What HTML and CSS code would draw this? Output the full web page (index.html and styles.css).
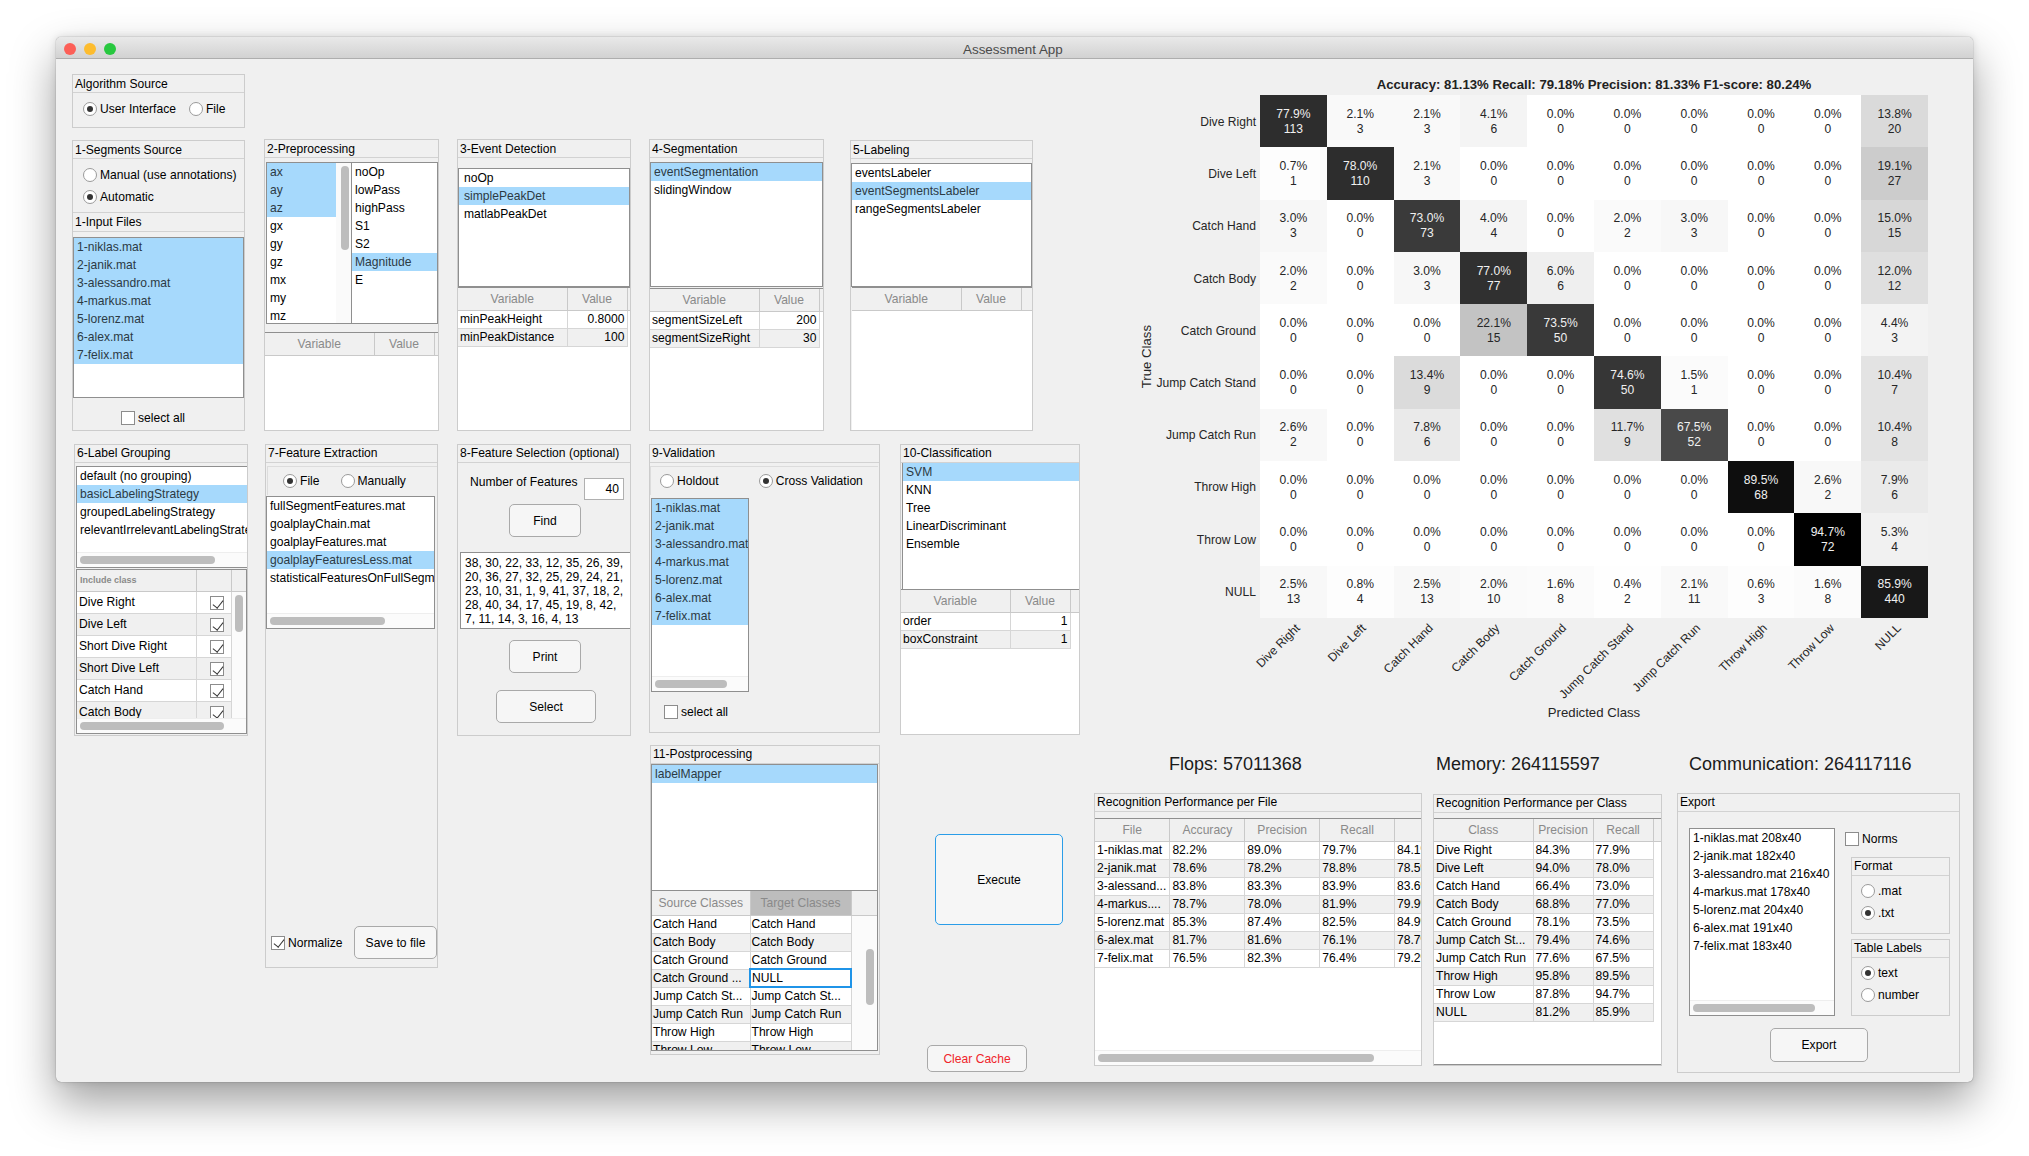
FILE: index.html
```html
<!DOCTYPE html>
<html lang="en">
<head>
  <meta charset="UTF-8">
  <title>Assessment App</title>
  <link rel="stylesheet" href="styles.css">
</head>
<body>
<div class="window">
  <div class="titlebar">
    <span class="light red"></span><span class="light yellow"></span><span class="light green"></span>
    <span class="title">Assessment App</span>
  </div>

  <div class="content">
    <div class="left">
      <section class="panel algo">
        <h2>Algorithm Source</h2>
        <div class="radio-line algo-radios">
          <label class="opt"><span class="radio on"></span>User Interface</label>
          <label class="opt file-opt"><span class="radio"></span>File</label>
        </div>
      </section>

      <div class="row-top">
        <section class="panel p1">
          <h2>1-Segments Source</h2>
          <div class="source-radios">
            <label class="opt"><span class="radio"></span>Manual (use annotations)</label>
            <label class="opt"><span class="radio on"></span>Automatic</label>
          </div>
          <h2 class="second-head">1-Input Files</h2>
          <ul class="list files-list">
            <li class="sel">1-niklas.mat</li>
            <li class="sel">2-janik.mat</li>
            <li class="sel">3-alessandro.mat</li>
            <li class="sel">4-markus.mat</li>
            <li class="sel">5-lorenz.mat</li>
            <li class="sel">6-alex.mat</li>
            <li class="sel">7-felix.mat</li>
          </ul>
          <label class="opt select-all"><span class="check"></span>select all</label>
        </section>

        <section class="panel p2">
          <h2>2-Preprocessing</h2>
          <div class="dual">
            <div class="dual-left">
              <ul class="list-plain signals">
                <li class="sel">ax</li>
                <li class="sel">ay</li>
                <li class="sel">az</li>
                <li>gx</li>
                <li>gy</li>
                <li>gz</li>
                <li>mx</li>
                <li>my</li>
                <li>mz</li>
              </ul>
              <div class="vtrack"><div class="vthumb"></div></div>
            </div>
            <ul class="list-plain filters">
              <li>noOp</li>
              <li>lowPass</li>
              <li>highPass</li>
              <li>S1</li>
              <li>S2</li>
              <li class="sel">Magnitude</li>
              <li>E</li>
            </ul>
          </div>
          <div class="tbl-wrap p2-table">
            <table class="tbl">
              <thead><tr><th class="w-109">Variable</th><th class="w-60">Value</th><th></th></tr></thead>
            </table>
          </div>
        </section>

        <section class="panel p3">
          <h2>3-Event Detection</h2>
          <ul class="list event-list">
            <li>noOp</li>
            <li class="sel">simplePeakDet</li>
            <li>matlabPeakDet</li>
          </ul>
          <div class="tbl-wrap">
            <table class="tbl">
              <thead><tr><th class="w-109">Variable</th><th class="w-60">Value</th><th></th></tr></thead>
              <tbody>
                <tr><td>minPeakHeight</td><td class="num">0.8000</td></tr>
                <tr><td>minPeakDistance</td><td class="num">100</td></tr>
              </tbody>
            </table>
          </div>
        </section>

        <section class="panel p4">
          <h2>4-Segmentation</h2>
          <ul class="list segment-list">
            <li class="sel">eventSegmentation</li>
            <li>slidingWindow</li>
          </ul>
          <div class="tbl-wrap seg-table">
            <table class="tbl">
              <thead><tr><th class="w-109">Variable</th><th class="w-60">Value</th><th></th></tr></thead>
              <tbody>
                <tr><td>segmentSizeLeft</td><td class="num">200</td></tr>
                <tr><td>segmentSizeRight</td><td class="num">30</td></tr>
              </tbody>
            </table>
          </div>
        </section>

        <section class="panel p5">
          <h2>5-Labeling</h2>
          <ul class="list label-list">
            <li>eventsLabeler</li>
            <li class="sel">eventSegmentsLabeler</li>
            <li>rangeSegmentsLabeler</li>
          </ul>
          <div class="tbl-wrap label-table">
            <table class="tbl">
              <thead><tr><th class="w-109">Variable</th><th class="w-60">Value</th><th></th></tr></thead>
            </table>
          </div>
        </section>
      </div>

      <div class="row-bottom">
        <section class="panel p6">
          <h2>6-Label Grouping</h2>
          <div class="list scroll-list group-list">
            <ul class="list-plain">
              <li>default (no grouping)</li>
              <li class="sel">basicLabelingStrategy</li>
              <li>groupedLabelingStrategy</li>
              <li>relevantIrrelevantLabelingStrategy</li>
            </ul>
            <div class="hscroll"><div class="hthumb thumb-135"></div></div>
          </div>
          <div class="list scroll-list class-table">
            <div class="tbl-clip">
              <table class="tbl tall-rows">
                <thead><tr><th class="w-119 small-head">Include class</th><th class="w-35"></th><th></th></tr></thead>
                <tbody>
                  <tr><td>Dive Right</td><td class="mid"><span class="check on"></span></td></tr>
                  <tr><td>Dive Left</td><td class="mid"><span class="check on"></span></td></tr>
                  <tr><td>Short Dive Right</td><td class="mid"><span class="check on"></span></td></tr>
                  <tr><td>Short Dive Left</td><td class="mid"><span class="check on"></span></td></tr>
                  <tr><td>Catch Hand</td><td class="mid"><span class="check on"></span></td></tr>
                  <tr><td>Catch Body</td><td class="mid"><span class="check on"></span></td></tr>
                </tbody>
              </table>
              <div class="vthumb class-thumb"></div>
            </div>
            <div class="hscroll"><div class="hthumb thumb-144"></div></div>
          </div>
        </section>

        <section class="panel p7">
          <h2>7-Feature Extraction</h2>
          <div class="subradio radio-line feature-radios">
            <label class="opt"><span class="radio on"></span>File</label>
            <label class="opt manual-opt"><span class="radio"></span>Manually</label>
          </div>
          <div class="list scroll-list feature-list">
            <ul class="list-plain">
              <li>fullSegmentFeatures.mat</li>
              <li>goalplayChain.mat</li>
              <li>goalplayFeatures.mat</li>
              <li class="sel">goalplayFeaturesLess.mat</li>
              <li>statisticalFeaturesOnFullSegments.mat</li>
            </ul>
            <div class="hscroll"><div class="hthumb thumb-115"></div></div>
          </div>
          <div class="normalize-row">
            <label class="opt"><span class="check on"></span>Normalize</label>
            <button class="btn save-btn">Save to file</button>
          </div>
        </section>

        <section class="panel p8">
          <h2>8-Feature Selection (optional)</h2>
          <div class="features-count">
            <span class="count-label">Number of Features</span>
            <span class="num-input">40</span>
          </div>
          <button class="btn find-btn">Find</button>
          <div class="result-box">38, 30, 22, 33, 12, 35, 26, 39,<br>20, 36, 27, 32, 25, 29, 24, 21,<br>23, 10, 31, 1, 9, 41, 37, 18, 2,<br>28, 40, 34, 17, 45, 19, 8, 42,<br>7, 11, 14, 3, 16, 4, 13</div>
          <button class="btn find-btn print-btn">Print</button>
          <button class="btn select-btn">Select</button>
        </section>

        <div class="col-valid">
          <section class="panel p9">
            <h2>9-Validation</h2>
            <div class="subradio radio-line valid-radios">
              <label class="opt"><span class="radio"></span>Holdout</label>
              <label class="opt cross-opt"><span class="radio on"></span>Cross Validation</label>
            </div>
            <div class="list scroll-list valid-list">
              <ul class="list-plain">
                <li class="sel">1-niklas.mat</li>
                <li class="sel">2-janik.mat</li>
                <li class="sel">3-alessandro.mat</li>
                <li class="sel">4-markus.mat</li>
                <li class="sel">5-lorenz.mat</li>
                <li class="sel">6-alex.mat</li>
                <li class="sel">7-felix.mat</li>
              </ul>
              <div class="hscroll"><div class="hthumb thumb-72"></div></div>
            </div>
            <label class="opt valid-all"><span class="check"></span>select all</label>
          </section>

          <section class="panel p11">
            <h2>11-Postprocessing</h2>
            <ul class="list post-list">
              <li class="sel">labelMapper</li>
            </ul>
            <div class="tbl-wrap post-table">
              <table class="tbl">
                <thead><tr><th class="w-98">Source Classes</th><th class="w-101 sorted">Target Classes</th><th></th></tr></thead>
                <tbody>
                  <tr><td>Catch Hand</td><td>Catch Hand</td></tr>
                  <tr><td>Catch Body</td><td>Catch Body</td></tr>
                  <tr><td>Catch Ground</td><td>Catch Ground</td></tr>
                  <tr><td>Catch Ground ...</td><td class="focus">NULL</td></tr>
                  <tr><td>Jump Catch St...</td><td>Jump Catch St...</td></tr>
                  <tr><td>Jump Catch Run</td><td>Jump Catch Run</td></tr>
                  <tr><td>Throw High</td><td>Throw High</td></tr>
                  <tr><td>Throw Low</td><td>Throw Low</td></tr>
                </tbody>
              </table>
              <div class="vthumb post-thumb"></div>
            </div>
          </section>
        </div>

        <div class="col-class">
          <section class="panel p10">
            <h2>10-Classification</h2>
            <ul class="list class-list">
              <li class="sel">SVM</li>
              <li>KNN</li>
              <li>Tree</li>
              <li>LinearDiscriminant</li>
              <li>Ensemble</li>
            </ul>
            <div class="tbl-wrap">
              <table class="tbl">
                <thead><tr><th class="w-109">Variable</th><th class="w-60">Value</th><th></th></tr></thead>
                <tbody>
                  <tr><td>order</td><td class="num">1</td></tr>
                  <tr><td>boxConstraint</td><td class="num">1</td></tr>
                </tbody>
              </table>
            </div>
          </section>
          <button class="btn execute-btn">Execute</button>
          <button class="btn clear-btn">Clear Cache</button>
        </div>
      </div>
    </div>

    <div class="right">
      <div class="chart-title">Accuracy: 81.13% Recall: 79.18% Precision: 81.33% F1-score: 80.24%</div>
      <div class="chart">
        <div class="y-side">
          <div class="y-title"><span>True Class</span></div>
          <div class="y-labels">
            <span>Dive Right</span><span>Dive Left</span><span>Catch Hand</span><span>Catch Body</span><span>Catch Ground</span>
            <span>Jump Catch Stand</span><span>Jump Catch Run</span><span>Throw High</span><span>Throw Low</span><span>NULL</span>
          </div>
        </div>
        <div class="matrix">
          <div class="cell dark" style="background:#2d2d2d">77.9%<br>113</div>
          <div class="cell" style="background:#f9f9f9">2.1%<br>3</div>
          <div class="cell" style="background:#f9f9f9">2.1%<br>3</div>
          <div class="cell" style="background:#f4f4f4">4.1%<br>6</div>
          <div class="cell">0.0%<br>0</div>
          <div class="cell">0.0%<br>0</div>
          <div class="cell">0.0%<br>0</div>
          <div class="cell">0.0%<br>0</div>
          <div class="cell">0.0%<br>0</div>
          <div class="cell" style="background:#dadada">13.8%<br>20</div>

          <div class="cell" style="background:#fdfdfd">0.7%<br>1</div>
          <div class="cell dark" style="background:#2d2d2d">78.0%<br>110</div>
          <div class="cell" style="background:#f9f9f9">2.1%<br>3</div>
          <div class="cell">0.0%<br>0</div>
          <div class="cell">0.0%<br>0</div>
          <div class="cell">0.0%<br>0</div>
          <div class="cell">0.0%<br>0</div>
          <div class="cell">0.0%<br>0</div>
          <div class="cell">0.0%<br>0</div>
          <div class="cell" style="background:#cccccc">19.1%<br>27</div>

          <div class="cell" style="background:#f7f7f7">3.0%<br>3</div>
          <div class="cell">0.0%<br>0</div>
          <div class="cell dark" style="background:#3a3a3a">73.0%<br>73</div>
          <div class="cell" style="background:#f4f4f4">4.0%<br>4</div>
          <div class="cell">0.0%<br>0</div>
          <div class="cell" style="background:#fafafa">2.0%<br>2</div>
          <div class="cell" style="background:#f7f7f7">3.0%<br>3</div>
          <div class="cell">0.0%<br>0</div>
          <div class="cell">0.0%<br>0</div>
          <div class="cell" style="background:#d7d7d7">15.0%<br>15</div>

          <div class="cell" style="background:#fafafa">2.0%<br>2</div>
          <div class="cell">0.0%<br>0</div>
          <div class="cell" style="background:#f7f7f7">3.0%<br>3</div>
          <div class="cell dark" style="background:#303030">77.0%<br>77</div>
          <div class="cell" style="background:#efefef">6.0%<br>6</div>
          <div class="cell">0.0%<br>0</div>
          <div class="cell">0.0%<br>0</div>
          <div class="cell">0.0%<br>0</div>
          <div class="cell">0.0%<br>0</div>
          <div class="cell" style="background:#dfdfdf">12.0%<br>12</div>

          <div class="cell">0.0%<br>0</div>
          <div class="cell">0.0%<br>0</div>
          <div class="cell">0.0%<br>0</div>
          <div class="cell" style="background:#c3c3c3">22.1%<br>15</div>
          <div class="cell dark" style="background:#393939">73.5%<br>50</div>
          <div class="cell">0.0%<br>0</div>
          <div class="cell">0.0%<br>0</div>
          <div class="cell">0.0%<br>0</div>
          <div class="cell">0.0%<br>0</div>
          <div class="cell" style="background:#f3f3f3">4.4%<br>3</div>

          <div class="cell">0.0%<br>0</div>
          <div class="cell">0.0%<br>0</div>
          <div class="cell" style="background:#dbdbdb">13.4%<br>9</div>
          <div class="cell">0.0%<br>0</div>
          <div class="cell">0.0%<br>0</div>
          <div class="cell dark" style="background:#363636">74.6%<br>50</div>
          <div class="cell" style="background:#fbfbfb">1.5%<br>1</div>
          <div class="cell">0.0%<br>0</div>
          <div class="cell">0.0%<br>0</div>
          <div class="cell" style="background:#e3e3e3">10.4%<br>7</div>

          <div class="cell" style="background:#f8f8f8">2.6%<br>2</div>
          <div class="cell">0.0%<br>0</div>
          <div class="cell" style="background:#eaeaea">7.8%<br>6</div>
          <div class="cell">0.0%<br>0</div>
          <div class="cell">0.0%<br>0</div>
          <div class="cell" style="background:#e0e0e0">11.7%<br>9</div>
          <div class="cell dark" style="background:#494949">67.5%<br>52</div>
          <div class="cell">0.0%<br>0</div>
          <div class="cell">0.0%<br>0</div>
          <div class="cell" style="background:#e3e3e3">10.4%<br>8</div>

          <div class="cell">0.0%<br>0</div>
          <div class="cell">0.0%<br>0</div>
          <div class="cell">0.0%<br>0</div>
          <div class="cell">0.0%<br>0</div>
          <div class="cell">0.0%<br>0</div>
          <div class="cell">0.0%<br>0</div>
          <div class="cell">0.0%<br>0</div>
          <div class="cell dark" style="background:#0e0e0e">89.5%<br>68</div>
          <div class="cell" style="background:#f8f8f8">2.6%<br>2</div>
          <div class="cell" style="background:#eaeaea">7.9%<br>6</div>

          <div class="cell">0.0%<br>0</div>
          <div class="cell">0.0%<br>0</div>
          <div class="cell">0.0%<br>0</div>
          <div class="cell">0.0%<br>0</div>
          <div class="cell">0.0%<br>0</div>
          <div class="cell">0.0%<br>0</div>
          <div class="cell">0.0%<br>0</div>
          <div class="cell">0.0%<br>0</div>
          <div class="cell dark" style="background:#000000">94.7%<br>72</div>
          <div class="cell" style="background:#f1f1f1">5.3%<br>4</div>

          <div class="cell" style="background:#f8f8f8">2.5%<br>13</div>
          <div class="cell" style="background:#fdfdfd">0.8%<br>4</div>
          <div class="cell" style="background:#f8f8f8">2.5%<br>13</div>
          <div class="cell" style="background:#fafafa">2.0%<br>10</div>
          <div class="cell" style="background:#fbfbfb">1.6%<br>8</div>
          <div class="cell" style="background:#fefefe">0.4%<br>2</div>
          <div class="cell" style="background:#f9f9f9">2.1%<br>11</div>
          <div class="cell" style="background:#fdfdfd">0.6%<br>3</div>
          <div class="cell" style="background:#fbfbfb">1.6%<br>8</div>
          <div class="cell dark" style="background:#181818">85.9%<br>440</div>
        </div>
        <div class="x-labels">
          <div class="tick"><span>Dive Right</span></div>
          <div class="tick"><span>Dive Left</span></div>
          <div class="tick"><span>Catch Hand</span></div>
          <div class="tick"><span>Catch Body</span></div>
          <div class="tick"><span>Catch Ground</span></div>
          <div class="tick"><span>Jump Catch Stand</span></div>
          <div class="tick"><span>Jump Catch Run</span></div>
          <div class="tick"><span>Throw High</span></div>
          <div class="tick"><span>Throw Low</span></div>
          <div class="tick"><span>NULL</span></div>
        </div>
        <div class="x-title">Predicted Class</div>
      </div>

      <div class="stats">
        <span>Flops: 57011368</span>
        <span>Memory: 264115597</span>
        <span>Communication: 264117116</span>
      </div>

      <div class="row-results">
        <section class="panel per-file">
          <h2>Recognition Performance per File</h2>
          <div class="tbl-wrap scroll-list">
            <div class="tbl-clip">
              <table class="tbl file-table">
                <thead><tr><th>File</th><th>Accuracy</th><th>Precision</th><th>Recall</th><th>F1</th></tr></thead>
                <tbody>
                  <tr><td>1-niklas.mat</td><td>82.2%</td><td>89.0%</td><td>79.7%</td><td>84.1%</td></tr>
                  <tr><td>2-janik.mat</td><td>78.6%</td><td>78.2%</td><td>78.8%</td><td>78.5%</td></tr>
                  <tr><td>3-alessand...</td><td>83.8%</td><td>83.3%</td><td>83.9%</td><td>83.6%</td></tr>
                  <tr><td>4-markus....</td><td>78.7%</td><td>78.0%</td><td>81.9%</td><td>79.9%</td></tr>
                  <tr><td>5-lorenz.mat</td><td>85.3%</td><td>87.4%</td><td>82.5%</td><td>84.9%</td></tr>
                  <tr><td>6-alex.mat</td><td>81.7%</td><td>81.6%</td><td>76.1%</td><td>78.7%</td></tr>
                  <tr><td>7-felix.mat</td><td>76.5%</td><td>82.3%</td><td>76.4%</td><td>79.2%</td></tr>
                </tbody>
              </table>
            </div>
            <div class="hscroll"><div class="hthumb thumb-276"></div></div>
          </div>
        </section>

        <section class="panel per-class">
          <h2>Recognition Performance per Class</h2>
          <div class="tbl-wrap">
            <table class="tbl">
              <thead><tr><th class="w-99">Class</th><th class="w-60">Precision</th><th class="w-60">Recall</th><th></th></tr></thead>
              <tbody>
                <tr><td>Dive Right</td><td>84.3%</td><td>77.9%</td></tr>
                <tr><td>Dive Left</td><td>94.0%</td><td>78.0%</td></tr>
                <tr><td>Catch Hand</td><td>66.4%</td><td>73.0%</td></tr>
                <tr><td>Catch Body</td><td>68.8%</td><td>77.0%</td></tr>
                <tr><td>Catch Ground</td><td>78.1%</td><td>73.5%</td></tr>
                <tr><td>Jump Catch St...</td><td>79.4%</td><td>74.6%</td></tr>
                <tr><td>Jump Catch Run</td><td>77.6%</td><td>67.5%</td></tr>
                <tr><td>Throw High</td><td>95.8%</td><td>89.5%</td></tr>
                <tr><td>Throw Low</td><td>87.8%</td><td>94.7%</td></tr>
                <tr><td>NULL</td><td>81.2%</td><td>85.9%</td></tr>
              </tbody>
            </table>
          </div>
        </section>

        <section class="panel export">
          <h2>Export</h2>
          <div class="export-body">
            <div class="list scroll-list export-list">
              <ul class="list-plain">
                <li>1-niklas.mat 208x40</li>
                <li>2-janik.mat 182x40</li>
                <li>3-alessandro.mat 216x40</li>
                <li>4-markus.mat 178x40</li>
                <li>5-lorenz.mat 204x40</li>
                <li>6-alex.mat 191x40</li>
                <li>7-felix.mat 183x40</li>
              </ul>
              <div class="hscroll"><div class="hthumb thumb-122"></div></div>
            </div>
            <div class="export-side">
              <label class="opt norms"><span class="check"></span>Norms</label>
              <section class="panel sub-panel">
                <h2>Format</h2>
                <div class="sub-radios">
                  <label class="opt"><span class="radio"></span>.mat</label>
                  <label class="opt"><span class="radio on"></span>.txt</label>
                </div>
              </section>
              <section class="panel sub-panel labels-panel">
                <h2>Table Labels</h2>
                <div class="sub-radios">
                  <label class="opt"><span class="radio on"></span>text</label>
                  <label class="opt"><span class="radio"></span>number</label>
                </div>
              </section>
            </div>
          </div>
          <button class="btn export-btn">Export</button>
        </section>
      </div>
    </div>
  </div>
</div>
</body>
</html>
```

FILE: styles.css
```css
* {
  box-sizing: border-box;
}

html, body {
  height: 100%;
  margin: 0;
  overflow: hidden;
}

body {
  background: #fff;
  color: #000;
  font-family: "Liberation Sans", Arial, sans-serif;
  font-size: 12.1px;
  padding: 37px 0 0 56px;
}

ul {
  list-style: none;
  margin: 0;
  padding: 0;
}

/* window frame */
.window {
  width: 1917px;
  height: 1045px;
  background: #f0f0f0;
  border-radius: 5px;
  box-shadow: 0 0 1px rgba(0, 0, 0, 0.6), 0 20px 45px rgba(0, 0, 0, 0.38), 0 0 8px rgba(0, 0, 0, 0.12);
}

.titlebar {
  display: flex;
  align-items: center;
  height: 22px;
  padding: 2px 0 0 8px;
  background: linear-gradient(#e9e9e9, #d2d2d2);
  border-bottom: 1px solid #aeaeae;
  border-radius: 5px 5px 0 0;
}

.light {
  width: 12px;
  height: 12px;
  margin-right: 8px;
  border-radius: 50%;
}

.red { background: #fc5f57; }
.yellow { background: #fdbc2e; }
.green { background: #28c83f; }

.title {
  margin: 1px 0 0 839px;
  font-size: 13.4px;
  color: #4a4a4a;
}

.content {
  display: flex;
}

.left {
  width: 1022px;
  margin-left: 16px;
  padding-top: 15px;
}

.right {
  width: 866px;
  margin-left: 0;
  padding-top: 19px;
}

/* panels */
.panel {
  display: flex;
  flex-direction: column;
  flex: none;
  border: 1px solid #cccccc;
  background: #f0f0f0;
}

.panel h2, .second-head {
  flex: none;
  height: 18px;
  margin: 0;
  padding-left: 2px;
  font-size: 12.1px;
  font-weight: normal;
  line-height: 18px;
  border-bottom: 1px solid #d2d2d2;
}

.panel .second-head {
  border-top: 1px solid #d2d2d2;
  height: 20px;
}

.row-bottom .panel h2, .row-results .panel h2 {
  line-height: 16px;
}

.row-top {
  display: flex;
  height: 292px;
  margin-top: 11px;
}

.row-bottom {
  display: flex;
  margin-top: 13px;
}

.algo {
  width: 173px;
  height: 54px;
}

.algo-radios {
  margin-top: 7px;
  padding-left: 10px;
}

.file-opt {
  margin-left: 13px;
}

.radio-line {
  display: flex;
  align-items: center;
  height: 18px;
}

.opt {
  display: inline-flex;
  align-items: center;
  white-space: nowrap;
}

.radio {
  position: relative;
  flex: none;
  width: 14px;
  height: 14px;
  margin-right: 3px;
  background: #fff;
  border: 1px solid #9a9a9a;
  border-radius: 50%;
}

.radio.on::after {
  content: "";
  position: absolute;
  left: 3px;
  top: 3px;
  width: 6px;
  height: 6px;
  border-radius: 50%;
  background: #333;
}

.check {
  position: relative;
  display: inline-block;
  flex: none;
  width: 14px;
  height: 14px;
  margin-right: 3px;
  background: #fff;
  border: 1px solid #8c8c8c;
}

.check.on::after {
  content: "";
  position: absolute;
  left: 4px;
  top: 0.5px;
  width: 5px;
  height: 9px;
  border: solid #333;
  border-width: 0 1.5px 1.5px 0;
  transform: rotate(38deg);
}

/* lists */
.list {
  flex: none;
  overflow: hidden;
  background: #fff;
  border: 1px solid #8f8f8f;
}

.list li, .list-plain li {
  height: 18px;
  padding-left: 3px;
  line-height: 18px;
  white-space: nowrap;
}

.list li.sel, .list-plain li.sel {
  background: #a6d9fc;
  color: #2c3a44;
}

.scroll-list {
  display: flex;
  flex-direction: column;
}

.scroll-list ul {
  flex: 1;
  overflow: hidden;
}

.hscroll {
  flex: none;
  height: 15px;
  padding: 3px 0 0 3px;
  background: #fbfbfb;
  border-top: 1px solid #eeeeee;
}

.hthumb {
  height: 8px;
  background: #bdbdbd;
  border-radius: 4px;
}

.thumb-72 { width: 72px; }
.thumb-115 { width: 115px; }
.thumb-122 { width: 122px; }
.thumb-135 { width: 135px; }
.thumb-144 { width: 144px; }
.thumb-276 { width: 276px; }

.vtrack {
  flex: none;
  width: 15px;
  padding: 3px 0 0 5px;
  background: #fafafa;
}

.vthumb {
  width: 8px;
  height: 84px;
  background: #bdbdbd;
  border-radius: 4px;
}

/* tables */
.tbl-wrap {
  position: relative;
  flex: 1;
  min-height: 0;
  overflow: hidden;
  background: #fff;
  border-top: 1px solid #8f8f8f;
}

.tbl-clip {
  position: relative;
  flex: 1;
  min-height: 0;
  overflow: hidden;
}

.tbl {
  width: 100%;
  table-layout: fixed;
  border-collapse: collapse;
}

.tbl th {
  height: 22px;
  padding: 0;
  overflow: hidden;
  background: #f0f0f0;
  border-right: 1px solid #c9c9c9;
  border-bottom: 1px solid #c9c9c9;
  color: #8a8a8a;
  font-weight: normal;
  white-space: nowrap;
}

.tbl th:last-child {
  border-right: 0;
}

.tbl td {
  height: 18px;
  padding: 0 2px;
  overflow: hidden;
  border-right: 1px solid #d6d6d6;
  border-bottom: 1px solid #d6d6d6;
  background: #fff;
  line-height: 16px;
  white-space: nowrap;
}

.tbl tr:nth-child(even) td {
  background: #f0f0f0;
}

.tbl td.num {
  text-align: right;
}

.tbl td.mid {
  padding: 4px 0 0 6px;
  text-align: center;
}

.tbl td.mid .check {
  margin-right: 0;
  vertical-align: top;
}

.tbl tr td.focus {
  border: 2px solid #1f94e8;
  background: #fff;
}

.tbl th.sorted {
  background: #bdbdbd;
}

.tall-rows td {
  height: 22px;
}

.tall-rows th {
  height: 21px;
}

.tbl .small-head {
  padding-left: 3px;
  color: #8a8a8a;
  font-size: 9px;
  font-weight: bold;
  text-align: left;
}

.w-35 { width: 35px; }
.w-60 { width: 60px; }
.w-98 { width: 98px; }
.w-99 { width: 99px; }
.w-101 { width: 101px; }
.w-109 { width: 109px; }
.w-119 { width: 119px; }

/* buttons */
.btn {
  display: block;
  flex: none;
  padding: 0;
  background: #f6f6f6;
  border: 1px solid #a9a9a9;
  border-radius: 5px;
  color: #000;
  font: inherit;
}

/* row 1 */
.p1 {
  width: 173px;
  height: 291px;
  margin-top: 1px;
}

.source-radios {
  display: flex;
  flex-direction: column;
  flex: none;
  height: 53px;
  padding: 7px 0 0 10px;
  gap: 4px;
}

.source-radios .opt {
  height: 18px;
}

.files-list {
  height: 161px;
  margin-top: 5px;
}

.select-all {
  margin-top: 13px;
  padding-left: 48px;
}

.p2 {
  width: 175px;
  margin-left: 19px;
}

.dual {
  display: flex;
  flex: none;
  height: 162px;
  margin: 4px 0 0 1px;
  overflow: hidden;
  background: #fff;
  border: 1px solid #8f8f8f;
}

.dual-left {
  display: flex;
  width: 85px;
  border-right: 1px solid #8f8f8f;
}

.signals {
  flex: 1;
  overflow: hidden;
}

.filters {
  flex: 1;
}

.p2-table {
  margin-top: 8px;
}

.p3 {
  width: 174px;
  margin-left: 18px;
}

.event-list {
  height: 119px;
  margin-top: 10px;
}

.event-list li {
  padding-left: 5px;
}

.p4 {
  width: 175px;
  margin-left: 18px;
}

.segment-list {
  height: 125px;
  margin-top: 4px;
}

.seg-table {
  margin-top: 1px;
}

.p5 {
  width: 183px;
  height: 291px;
  margin: 1px 0 0 26px;
}

.label-list {
  height: 124px;
  margin-top: 4px;
}

.label-table {
  margin-left: 1px;
}

/* row 2 */
.p6 {
  width: 174px;
  height: 292px;
  margin-left: 2px;
}

.group-list {
  height: 102px;
  margin: 3px 0 0 1px;
  border-right: 0;
}

.class-table {
  height: 165px;
  margin: 1px 0 0 1px;
  width: 171px;
}

.class-table .tbl-clip {
  background: #fbfbfb;
}

.class-thumb {
  position: absolute;
  top: 25px;
  left: 158px;
  height: 37px;
}

.p7 {
  width: 173px;
  height: 524px;
  margin-left: 17px;
}

.subradio {
  flex: none;
  height: 29px;
  margin-top: 3px;
  background: #f0f0f0;
  border: 1px solid #dcdcdc;
  border-right: 0;
  border-bottom: 0;
}

.feature-radios {
  margin-left: 1px;
  padding-left: 15px;
}

.manual-opt {
  margin-left: 21px;
}

.feature-list {
  width: 169px;
  height: 133px;
  margin-top: 1px;
}

.normalize-row {
  display: flex;
  align-items: center;
  justify-content: space-between;
  margin-top: auto;
  padding: 0 0 8px 5px;
}

.save-btn {
  width: 83px;
  height: 33px;
}

.p8 {
  width: 174px;
  height: 292px;
  margin-left: 19px;
}

.features-count {
  display: flex;
  flex: none;
  justify-content: space-between;
  height: 25px;
  margin: 12px 6px 0 12px;
}

.count-label {
  line-height: 14px;
}

.num-input {
  width: 40px;
  height: 22px;
  margin-top: 3px;
  padding-right: 4px;
  background: #fff;
  border: 1px solid #b0b0b0;
  line-height: 20px;
  text-align: right;
}

.find-btn {
  width: 72px;
  height: 33px;
  margin: 4px 0 0 51px;
}

.result-box {
  flex: none;
  height: 77px;
  margin: 15px 0 0 2px;
  padding: 3px 0 0 4px;
  background: #fff;
  border: 1px solid #8f8f8f;
  border-right: 0;
  line-height: 14px;
  white-space: nowrap;
}

.print-btn {
  margin-top: 11px;
}

.select-btn {
  width: 100px;
  height: 33px;
  margin: 17px 0 0 38px;
}

.col-valid {
  flex: none;
  width: 231px;
  margin-left: 18px;
}

.p9 {
  height: 289px;
}

.valid-radios {
  padding-left: 9px;
  margin-right: 1px;
}

.cross-opt {
  margin-left: 40px;
}

.valid-list {
  width: 98px;
  height: 194px;
  margin: 3px 0 0 1px;
}

.valid-all {
  margin: 13px 0 0 14px;
}

.p11 {
  height: 310px;
  margin: 12px 0 0 1px;
}

.post-list {
  height: 127px;
  margin: 0 1px 0 0;
  border-top-width: 1px;
}

.post-table {
  margin: 0 1px 3px 0;
  border: 1px solid #8f8f8f;
  border-top: 0;
  background: #fbfbfb;
}

.post-table th {
  height: 24px;
}

.post-table td {
  padding-left: 1px;
}

.post-thumb {
  position: absolute;
  top: 58px;
  left: 214px;
  height: 56px;
}

.col-class {
  flex: none;
  width: 180px;
  margin-left: 20px;
}

.p10 {
  height: 291px;
}

.class-list {
  height: 126px;
  margin-left: 1px;
  border-width: 0 0 0 1px;
}

.execute-btn {
  width: 128px;
  height: 91px;
  margin: 99px 0 0 35px;
  border-color: #2a9de8;
}

.clear-btn {
  width: 100px;
  height: 27px;
  margin: 120px 0 0 27px;
  color: #f0252b;
}

/* confusion matrix */
.chart-title {
  height: 14px;
  margin-left: 166px;
  width: 668px;
  font-size: 13.2px;
  font-weight: bold;
  line-height: 14px;
  text-align: center;
  color: #222;
}

.chart {
  display: grid;
  grid-template-columns: 166px 668px;
  margin-top: 3px;
  color: #262626;
}

.y-side {
  display: flex;
  padding-left: 45px;
}

.y-title {
  display: flex;
  align-items: center;
  justify-content: center;
  flex: none;
  width: 14px;
  font-size: 13.2px;
}

.y-title span {
  writing-mode: vertical-rl;
  transform: rotate(180deg);
}

.y-labels {
  display: grid;
  flex: 1;
  grid-template-rows: repeat(10, 1fr);
  align-items: center;
  padding: 1px 4px 0 0;
  text-align: right;
  white-space: nowrap;
}

.matrix {
  display: grid;
  grid-template-columns: repeat(10, 1fr);
  grid-template-rows: repeat(10, 1fr);
  height: 523px;
}

.cell {
  display: flex;
  align-items: center;
  justify-content: center;
  padding-top: 1px;
  background: #fff;
  line-height: 15px;
  text-align: center;
}

.cell.dark {
  color: #f0f0f0;
}

.x-labels {
  grid-column: 2;
  display: grid;
  grid-template-columns: repeat(10, minmax(0, 1fr));
  height: 88px;
}

.tick {
  display: flex;
  justify-content: flex-end;
  width: 50%;
}

.tick span {
  flex: none;
  height: 14px;
  margin: 1px -4px 0 0;
  line-height: 14px;
  white-space: nowrap;
  transform: rotate(-45deg);
  transform-origin: 100% 50%;
}

.x-title {
  grid-column: 2;
  height: 14px;
  font-size: 13.2px;
  line-height: 14px;
  text-align: center;
}

/* bottom right */
.stats {
  display: grid;
  grid-template-columns: 267px 253px auto;
  height: 22px;
  margin-top: 33px;
  padding-left: 75px;
  color: #1a1a1a;
  font-size: 18px;
  line-height: 22px;
}

.row-results {
  display: flex;
  margin-top: 18px;
}

.per-file {
  width: 328px;
  height: 273px;
}

.per-file .tbl-wrap {
  margin-top: 6px;
}

.file-table {
  width: 375px;
}

.per-class {
  width: 229px;
  height: 272px;
  margin: 1px 0 0 11px;
}

.per-class .tbl-wrap {
  margin-top: 5px;
  border-bottom: 1px solid #8f8f8f;
}

.export {
  width: 283px;
  height: 280px;
  margin-left: 15px;
}

.export-body {
  display: flex;
  flex: none;
}

.export-list {
  width: 146px;
  height: 188px;
  margin: 16px 0 0 11px;
}

.export-side {
  display: flex;
  flex-direction: column;
  flex: none;
  align-items: flex-end;
  width: 115px;
  margin: 20px 0 0 0;
}

.norms {
  align-self: flex-start;
  height: 14px;
  margin-left: 10px;
}

.sub-panel {
  width: 99px;
  height: 77px;
  margin-top: 11px;
}

.labels-panel {
  margin-top: 5px;
}

.sub-radios {
  display: flex;
  flex-direction: column;
  gap: 4px;
  padding: 6px 0 0 9px;
}

.sub-radios .opt {
  height: 18px;
}

.export-btn {
  width: 98px;
  height: 34px;
  margin: 12px 0 0 92px;
}
```
